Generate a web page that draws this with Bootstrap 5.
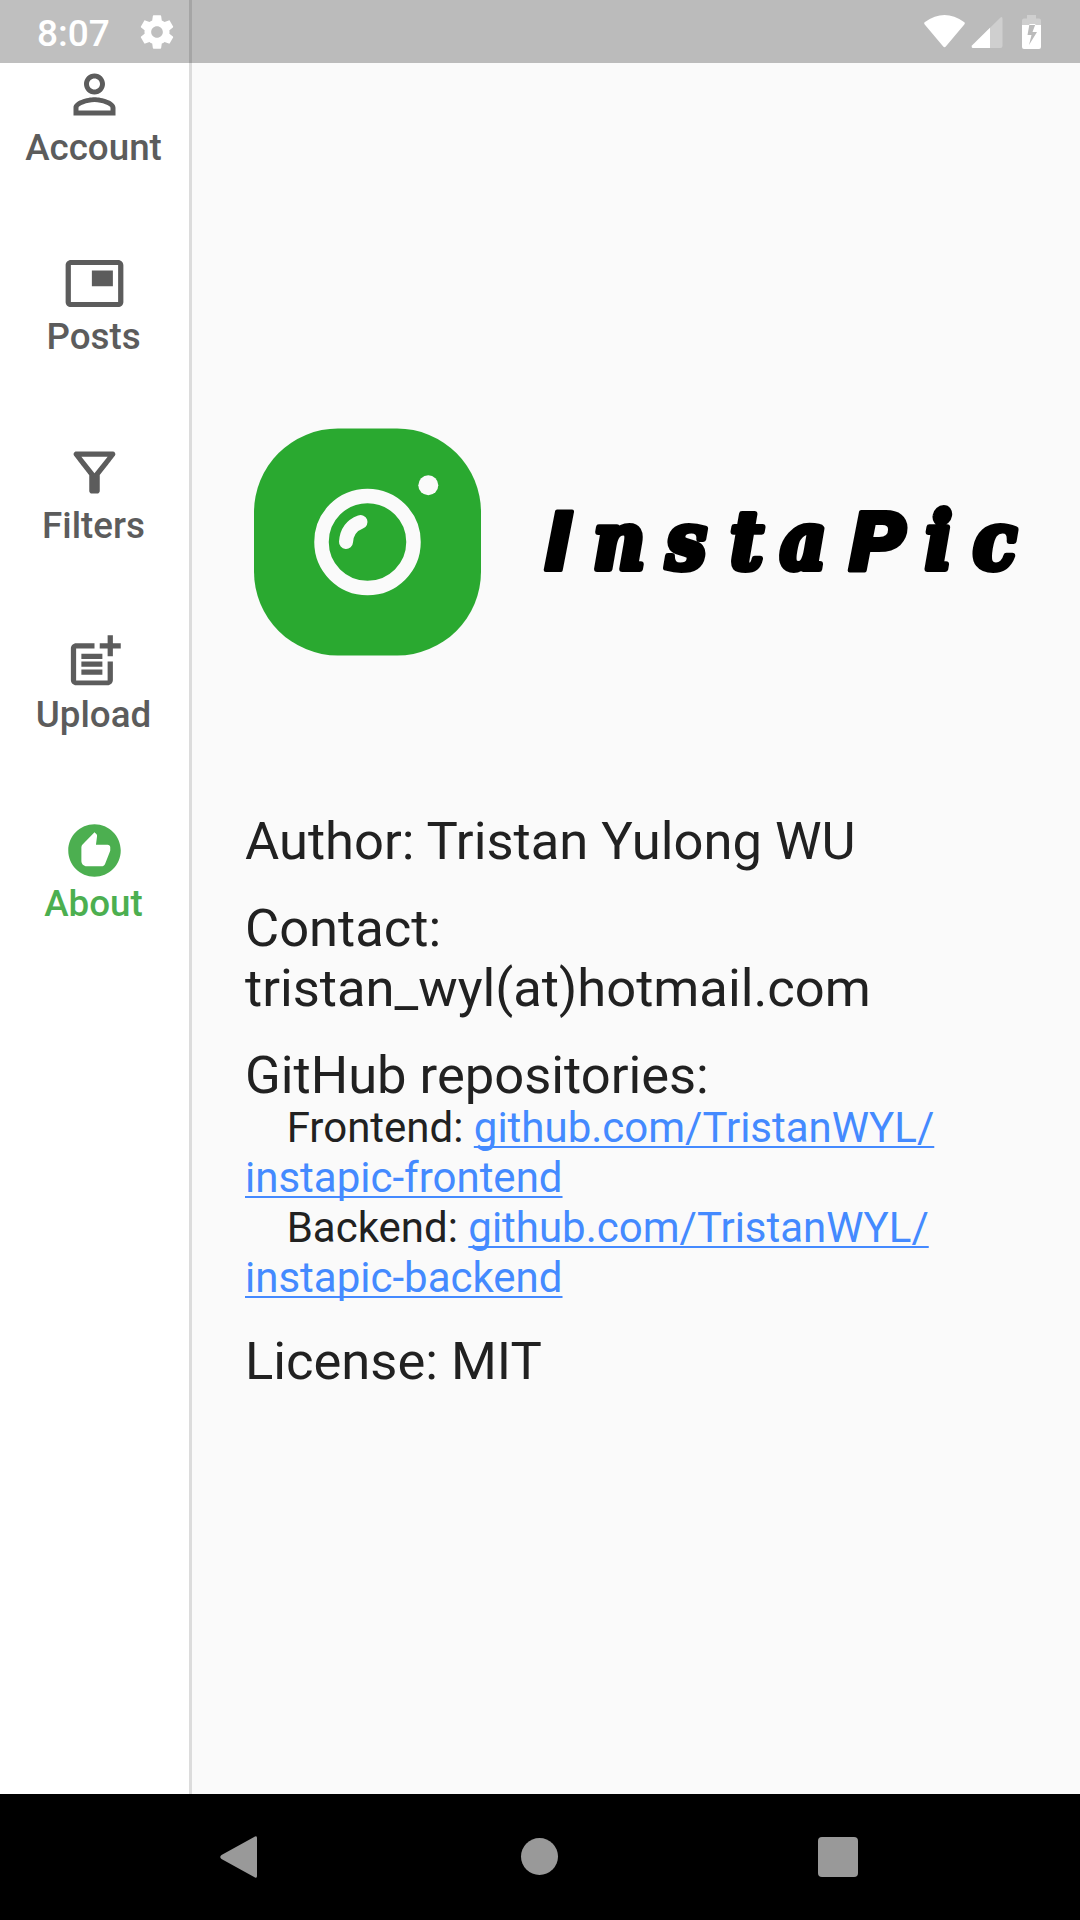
<!DOCTYPE html>
<html lang="en">
<head>
<meta charset="utf-8">
<meta name="viewport" content="width=device-width, initial-scale=1">
<title>InstaPic</title>
<link href="https://cdn.jsdelivr.net/npm/bootstrap@5.3.0/dist/css/bootstrap.min.css" rel="stylesheet">
<style>
body{font-family:Roboto,"Liberation Sans",sans-serif;background:#fafafa;color:#212121;height:1920px}
.statusbar{height:63px;background:rgba(0,0,0,.25);padding:0 39px 0 37px;z-index:5}
.clock{font-size:37px;font-weight:500;line-height:63px;width:100px;padding-top:3px}
.rail{width:192px;border-right:3px solid #dcdcdc;background:#fff;padding-top:63px}
.rail a{height:189px;font-size:36.75px;font-weight:500;line-height:43px;color:#5c5c5c}
.rail a.active{color:#4caf50}
.rail svg{width:63px;height:63px;fill:currentColor}
.rail span{margin-right:2px}
.about{padding:391px 0 0 53px}
.brandmark{width:800px;height:304px;display:block;margin-bottom:116px}
.fact{font-size:52.5px;line-height:60px;margin:0 0 27px}
.repos{font-size:42px;line-height:50px;margin:-29.5px 0 28.500px}
.repos a{color:#448aff;text-decoration-thickness:2px;text-underline-offset:4px;text-decoration-skip-ink:none}
.sysnav{height:126px;background:#000;padding:0 220px 0 218px}
.sysnav svg{width:42px;height:44px;fill:#999}
</style>
</head>
<body class="d-flex flex-column overflow-hidden position-relative">
<header class="statusbar d-flex align-items-center text-white position-absolute top-0 start-0 w-100">
  <span class="clock">8:07</span>
  <svg width="40" height="40" viewBox="0 0 24 24" fill="#fff" class="me-auto"><path d="M19.43 12.98c.04-.32.07-.64.07-.98s-.03-.66-.07-.98l2.11-1.65c.19-.15.24-.42.12-.64l-2-3.46c-.12-.22-.39-.3-.61-.22l-2.49 1c-.52-.4-1.08-.73-1.69-.98l-.38-2.65C14.46 2.18 14.25 2 14 2h-4c-.25 0-.46.18-.49.42l-.38 2.65c-.61.25-1.17.59-1.69.98l-2.49-1c-.23-.09-.49 0-.61.22l-2 3.46c-.13.22-.07.49.12.64l2.11 1.65c-.04.32-.07.65-.07.98s.03.66.07.98l-2.11 1.65c-.19.15-.24.42-.12.64l2 3.46c.12.22.39.3.61.22l2.49-1c.52.4 1.08.73 1.69.98l.38 2.65c.03.24.24.42.49.42h4c.25 0 .46-.18.49-.42l.38-2.65c.61-.25 1.17-.59 1.69-.98l2.49 1c.23.09.49 0 .61-.22l2-3.46c.12-.22.07-.49-.12-.64l-2.110-1.650zM12 15.5c-1.93 0-3.5-1.57-3.5-3.5s1.57-3.5 3.5-3.5 3.500 1.570 3.500 3.500-1.570 3.500-3.500 3.500z"/></svg>
  <svg width="118" height="34" viewBox="0 0 118 34" fill="#fff">
    <path d="M2 7Q21.500-7 41 7Q42.500 8 41.300 9.500L23 31.300Q21.500 33 20 31.300L1.700 9.500Q.5 8 2 7Z"/>
    <path d="M49 30.500L77.500 2.500Q79.500 1 79.500 4V31q0 2-2 2H50q-2-.5-1-2.500Z" opacity=".3"/><path d="M49 30.500L67 12.800V33H50q-2-.5-1-2.500Z"/>
    <path d="M99 10V5.500q0-2 2-2h3V0h9v3.500h3q2 0 2 2V10Z" opacity=".3"/>
    <path fill-rule="evenodd" d="M99 10H118V32q0 2-2 2H101q-2 0-2-2ZM106.500 9L104.500 20H108.500L106 30L114 17H109.500L112.500 9Z"/>
  </svg>
</header>

<div class="d-flex flex-grow-1">
  <nav class="rail nav flex-column flex-nowrap flex-shrink-0">
    <a href="#" class="text-decoration-none d-flex flex-column align-items-center"><svg viewBox="0 0 24 24"><path d="M12 5.900c1.160 0 2.100.94 2.100 2.100s-.94 2.100-2.100 2.100S9.900 9.160 9.900 8s.94-2.100 2.100-2.100m0 9c2.970 0 6.100 1.460 6.100 2.100v1.100H5.900V17c0-.64 3.130-2.100 6.100-2.100M12 4C9.790 4 8 5.790 8 8s1.790 4 4 4 4-1.790 4-4-1.790-4-4-4zm0 9c-2.670 0-8 1.340-8 4v3h16v-3c0-2.660-5.330-4-8-4z"/></svg><span>Account</span></a>
    <a href="#" class="text-decoration-none d-flex flex-column align-items-center"><svg viewBox="0 0 24 24"><path d="M19 7h-8v6h8V7zm2-4H3c-1.100 0-2 .9-2 2v14c0 1.100.9 1.980 2 1.980h18c1.100 0 2-.88 2-1.980V5c0-1.100-.9-2-2-2zm0 16.010H3V4.980h18v14.030z"/></svg><span>Posts</span></a>
    <a href="#" class="text-decoration-none d-flex flex-column align-items-center"><svg viewBox="0 0 24 24"><path d="M7 6h10l-5.010 6.300L7 6zm-2.750-.39C6.270 8.200 10 13 10 13v6c0 .55.450 1 1 1h2c.55 0 1-.45 1-1v-6s3.720-4.800 5.740-7.390A.998.998 0 0 0 18.950 4H5.040c-.83 0-1.300.95-.79 1.610z"/></svg><span>Filters</span></a>
    <a href="#" class="text-decoration-none d-flex flex-column align-items-center"><svg viewBox="0 0 24 24"><path d="M17 19.220H5V7h7V5H5c-1.100 0-2 .9-2 2v12c0 1.100.9 2 2 2h12c1.100 0 2-.9 2-2v-7h-2v7.220z"/><path d="M19 2h-2v3h-3c.01.010 0 2 0 2h3v2.990c.010.010 2 0 2 0V7h3V5h-3V2zM7 9h8v2H7zM7 12v2h8v-2H7zM7 15h8v2H7z"/></svg><span>Upload</span></a>
    <a href="#" class="active text-decoration-none d-flex flex-column align-items-center"><svg viewBox="0 0 24 24"><path d="M12 2C6.480 2 2 6.480 2 12s4.480 10 10 10 10-4.480 10-10S17.520 2 12 2zm6 9.800c0 .17-.03.330-.08.480l-1.900 4.840c-.25.520-.76.880-1.370.88H9c-1.100 0-2-.9-2-2v-5.200c0-.42.170-.79.450-1.060L12 5l.69.690c.18.180.29.440.29.710l-.02.230-.41 3.170H17c.55 0 1 .45 1 1v1z"/></svg><span>About</span></a>
  </nav>
  <main class="about flex-grow-1">
    <svg class="brandmark" viewBox="245 391 800 304">
      <rect x="254" y="428.500" width="227" height="227" rx="84" fill="#2aa930"/>
      <circle cx="367.500" cy="542" r="46" fill="none" stroke="#fafafa" stroke-width="14.500"/>
      <circle cx="428.300" cy="485.300" r="10" fill="#fafafa"/>
      <path d="M360.500 522Q347 527 346 542" fill="none" stroke="#fafafa" stroke-width="14" stroke-linecap="round"/>
      <g font-family="'DejaVu Serif Condensed','DejaVu Serif',serif" font-weight="700" font-style="italic" font-size="80" stroke="#000" stroke-width="6" stroke-linejoin="round">
        <text y="570" font-family="'DejaVu Sans','Liberation Sans',sans-serif" stroke-width="4"><tspan x="544">I</tspan><tspan x="848">P</tspan></text>
        <text y="569"><tspan x="593">n</tspan><tspan x="666">s</tspan><tspan x="730">t</tspan><tspan x="780">a</tspan><tspan x="925">i</tspan><tspan x="973">c</tspan></text>
      </g>
    </svg>
    <p class="fact">Author: Tristan Yulong WU</p>
    <p class="fact">Contact:<br>tristan_wyl(at)hotmail.com</p>
    <p class="fact">GitHub repositories:</p>
    <p class="repos">&nbsp;&nbsp;&nbsp;&nbsp;Frontend: <a href="#">github.com/TristanWYL/<br>instapic-frontend</a><br>&nbsp;&nbsp;&nbsp;&nbsp;Backend: <a href="#">github.com/TristanWYL/<br>instapic-backend</a></p>
    <p class="fact">License: MIT</p>
  </main>
</div>

<footer class="sysnav d-flex align-items-center justify-content-between flex-shrink-0">
  <svg viewBox="0 0 42 44"><path d="M3.500 20L37 1.500Q39 .5 39 3V41Q39 43.500 37 42.500L3.500 24Q1 22 3.500 20Z"/></svg>
  <svg viewBox="0 0 42 44"><circle cx="21.500" cy="21.500" r="18.500"/></svg>
  <svg viewBox="0 0 42 44"><rect y="2" width="40" height="40" rx="4"/></svg>
</footer>
<script src="https://cdn.jsdelivr.net/npm/bootstrap@5.3.0/dist/js/bootstrap.bundle.min.js"></script>
</body>
</html>
